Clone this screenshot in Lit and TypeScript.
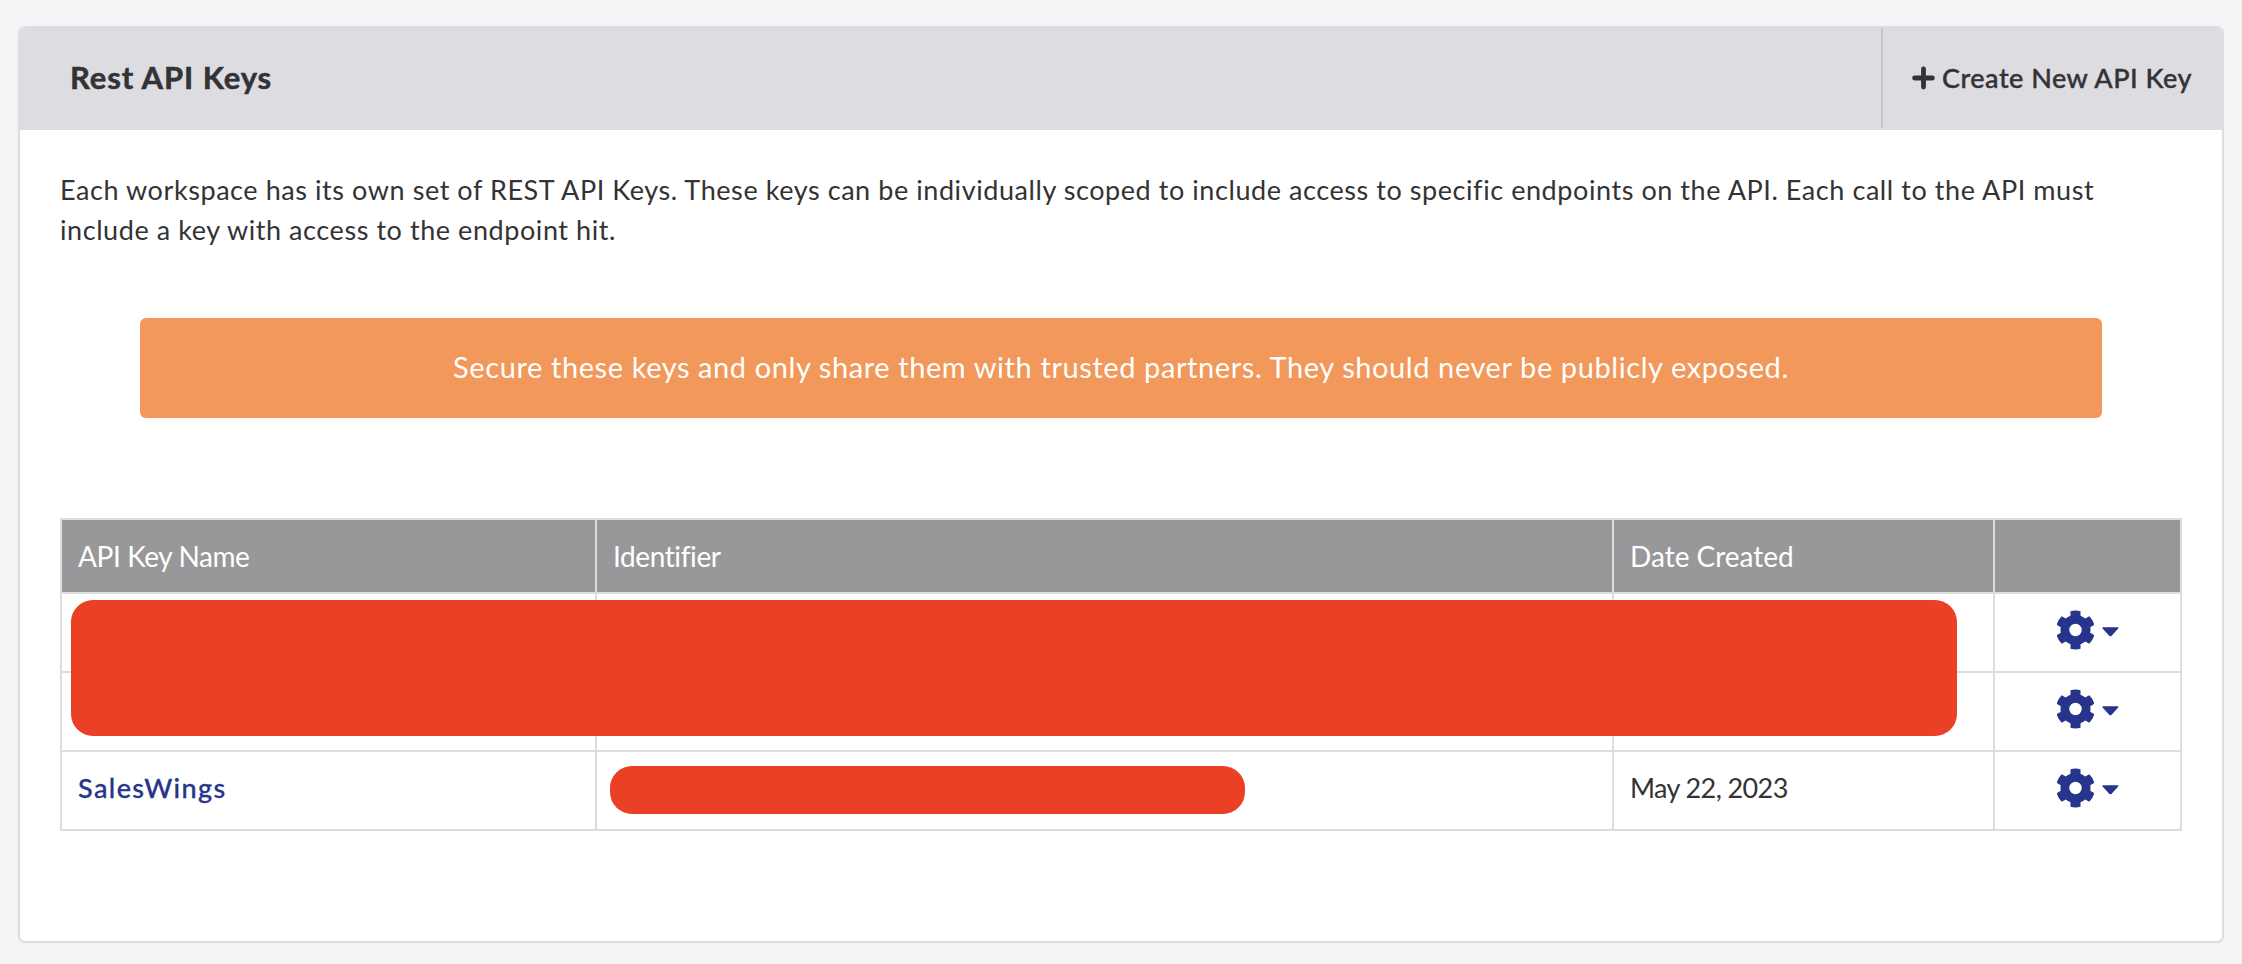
import { LitElement, html, svg, css } from "lit";
import { customElement } from "lit/decorators.js";

/** Outline of a six-toothed cog centred on the origin, with a round hole. */
function cogPath(body = 15, tip = 19.5, half = 5, hole = 6.2): string {
  const pt = (r: number, a: number) => `${(r * Math.cos(a)).toFixed(2)} ${(r * Math.sin(a)).toFixed(2)}`;
  const root = Math.asin(half / body);
  const top = Math.asin(half / tip);
  let d = "";
  for (let i = 0; i < 6; i++) {
    const a = (i * Math.PI) / 3 - Math.PI / 2;
    d += i === 0 ? `M${pt(body, a - root)}` : `A${body} ${body} 0 0 1 ${pt(body, a - root)}`;
    d += `L${pt(tip, a - top)}A${tip} ${tip} 0 0 1 ${pt(tip, a + top)}L${pt(body, a + root)}`;
  }
  return `${d}A${body} ${body} 0 0 1 ${pt(body, -Math.PI / 2 - root)}ZM${hole} 0A${hole} ${hole} 0 1 0 ${-hole} 0A${hole} ${hole} 0 1 0 ${hole} 0Z`;
}

const COG = cogPath();

@customElement("row-actions")
export class RowActions extends LitElement {
  static styles = css`
    :host { display: flex; align-items: center; gap: 8px; color: #27348b; }
    svg { display: block; fill: currentColor; }
    .caret { margin-top: 3px; }
  `;
  render() {
    return html`
      <svg width="37" height="40" viewBox="-18.5 -20 37 40">${svg`<path fill-rule="evenodd" d=${COG}></path>`}</svg>
      <svg class="caret" width="17" height="10" viewBox="0 0 17 10">
        <path d="M1 .2H15.8Q17 .6 16 1.7L9.4 8.9Q8.4 9.8 7.4 8.9L.8 1.7Q-.2 .6 1 .2Z"></path>
      </svg>
    `;
  }
}

interface KeyRow { name: string; created: string; }

@customElement("app-root")
export class AppRoot extends LitElement {
  static styles = css`
    :host {
      display: block;
      box-sizing: border-box;
      height: 964px;
      padding: 26px 18px 21px;
      background: #f4f4f7;
      color: #333335;
      font: 27px/40px Lato, "Open Sans", sans-serif;
    }
    * { box-sizing: border-box; }
    .card {
      display: flex;
      flex-direction: column;
      height: 917px;
      border: 2px solid #dcdce1;
      border-radius: 7px;
      background: #fff;
      overflow: hidden;
    }
    .head {
      display: flex;
      justify-content: space-between;
      height: 102px;
      flex: none;
      background: #dddce1;
      border-bottom: 2px solid #dddce1;
    }
    .title {
      display: flex;
      align-items: center;
      margin: 0;
      padding: 0 0 3px 50px;
      font-size: 31px;
      font-weight: 700;
      letter-spacing: 0.9px;
      -webkit-text-stroke: 0.5px currentColor;
    }
    .create {
      display: flex;
      align-items: center;
      width: 341px;
      padding: 0 0 1px 29px;
      border-left: 2px solid #c5c4ca;
      font-weight: 500;
      letter-spacing: 0.5px;
      white-space: nowrap;
      -webkit-text-stroke: 0.4px currentColor;
    }
    .create svg { display: block; margin-right: 7px; }
    .body { padding: 40px; }
    .intro { margin: 0; letter-spacing: 0.57px; }
    .warn {
      display: flex;
      align-items: center;
      justify-content: center;
      height: 100px;
      margin: 68px 80px 100px;
      padding-bottom: 2px;
      border-radius: 6px;
      background: #f1985a;
      color: #fff;
      font-size: 29px;
      letter-spacing: 0.59px;
    }
    .table {
      position: relative;
      display: grid;
      grid-template-columns: 535px 1017px 381px 187px;
      grid-template-rows: 74px 79px 79px 79px;
      border-top: 2px solid #dcdce0;
      border-left: 2px solid #dcdce0;
    }
    .cell {
      display: flex;
      align-items: center;
      padding: 0 16px;
      border-right: 2px solid #dcdcde;
      border-bottom: 2px solid #dcdcde;
      white-space: nowrap;
    }
    .th { background: #98989a; color: #fff; font-size: 28px; }
    .th-name { letter-spacing: -0.4px; }
    .th-id { letter-spacing: -0.4px; }
    .name { padding-bottom: 6px; color: #27348b; font-weight: 500; letter-spacing: 1.4px; -webkit-text-stroke: 0.3px currentColor; }
    .id { padding: 0 0 1px 13px; }
    .date { padding-bottom: 5px; letter-spacing: -0.6px; }
    .actions { justify-content: center; padding: 0 0 5px; }
    .mask { background: #ea4026; border-radius: 22px; }
    .mask-line { width: 635px; height: 48px; }
    .mask-rows {
      position: absolute;
      left: 9px;
      top: 80px;
      width: 1886px;
      height: 136px;
    }
  `;

  private rows: KeyRow[] = [
    { name: "", created: "" },
    { name: "", created: "" },
    { name: "SalesWings", created: "May 22, 2023" },
  ];

  render() {
    return html`
      <section class="card">
        <header class="head">
          <h2 class="title">Rest API Keys</h2>
          <div class="create">
            <svg width="23" height="24" viewBox="0 0 23 24" fill="none" stroke="currentColor" stroke-width="4.8" stroke-linecap="round">
              <path d="M11.5 2.9V21.1M2.6 12H20.4"></path>
            </svg>
            <span>Create New API Key</span>
          </div>
        </header>
        <div class="body">
          <p class="intro">Each workspace has its own set of REST API Keys. These keys can be individually scoped to include access to specific endpoints on the API. Each call to the API must include a key with access to the endpoint hit.</p>
          <div class="warn">Secure these keys and only share them with trusted partners. They should never be publicly exposed.</div>
          <div class="table">
            <div class="cell th th-name">API Key Name</div>
            <div class="cell th th-id">Identifier</div>
            <div class="cell th">Date Created</div>
            <div class="cell th"></div>
            ${this.rows.map((r) => html`
              <div class="cell name">${r.name}</div>
              <div class="cell id">${r.name ? html`<div class="mask mask-line"></div>` : null}</div>
              <div class="cell date">${r.created}</div>
              <div class="cell actions"><row-actions></row-actions></div>
            `)}
            <div class="mask mask-rows"></div>
          </div>
        </div>
      </section>
    `;
  }
}
